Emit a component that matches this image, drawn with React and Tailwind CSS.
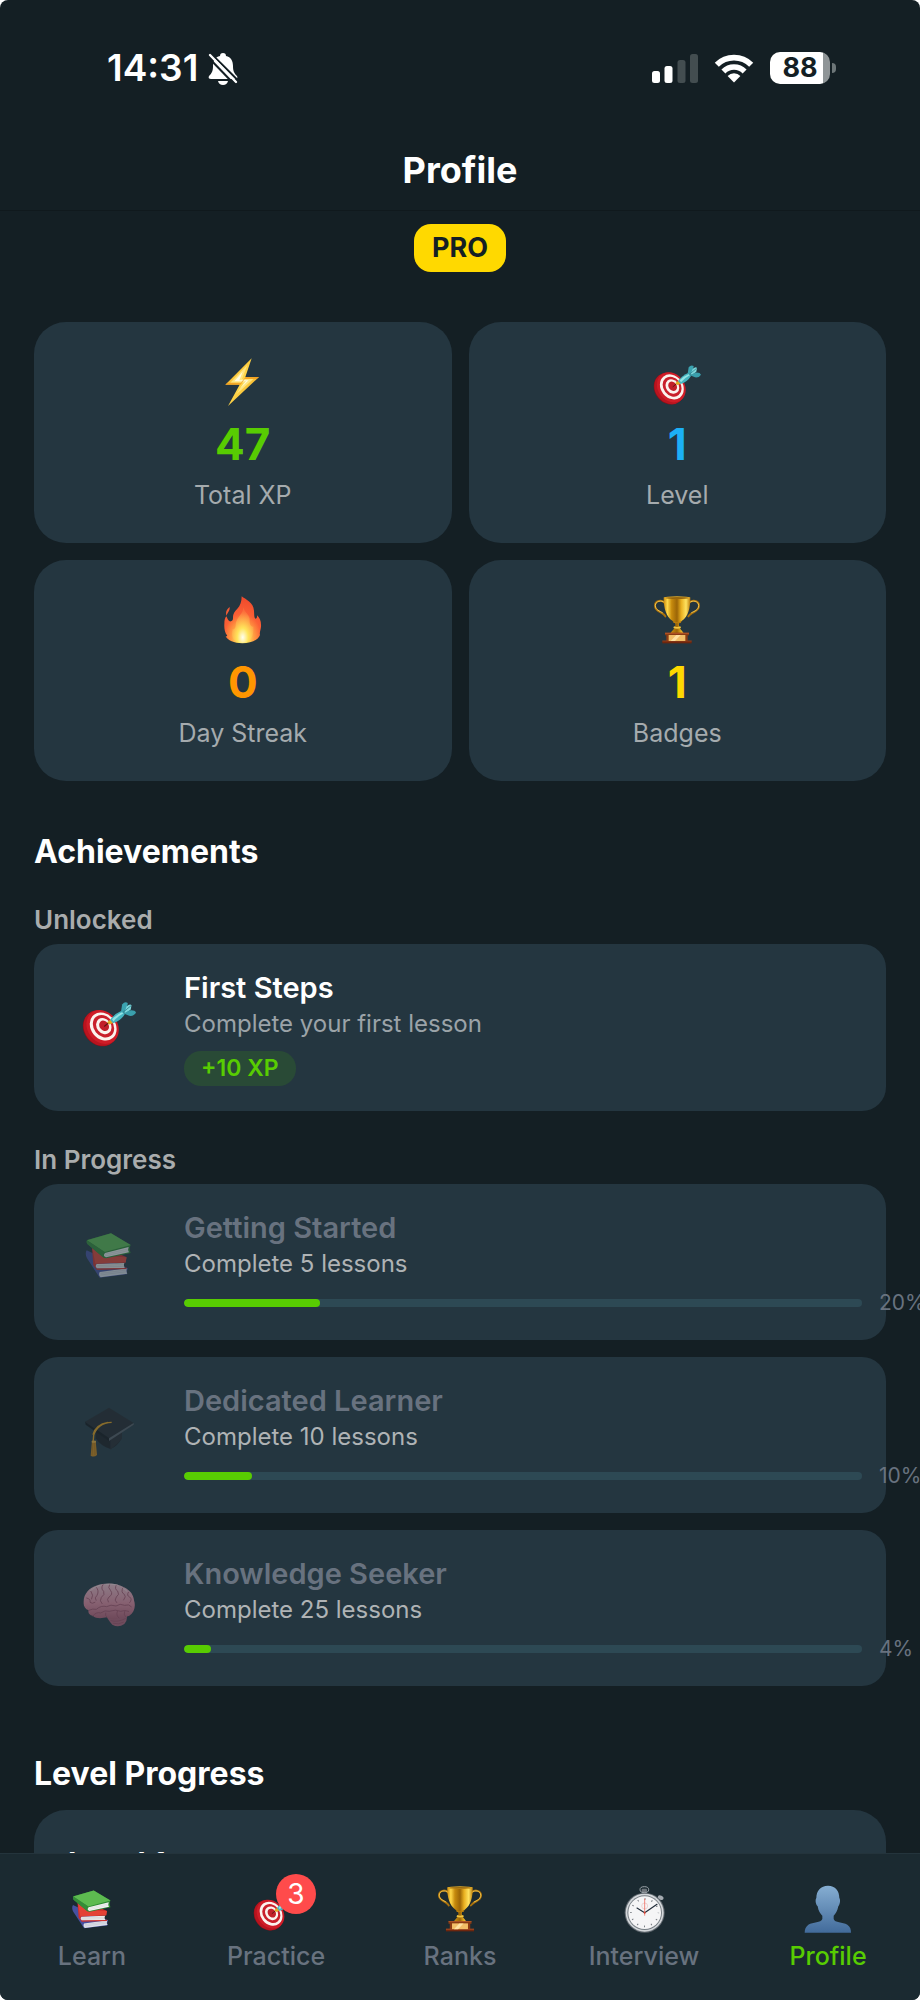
import React from 'react';

const BoltIcon = ({ className }) => (
  <svg viewBox="87 54 144 144" className={className} aria-hidden="true">
    <defs>
      <linearGradient id="bolt" x1="0" y1="0" x2="1" y2="1">
        <stop offset="0" stopColor="#f7a81b" />
        <stop offset="0.5" stopColor="#ffd84a" />
        <stop offset="1" stopColor="#e88d10" />
      </linearGradient>
    </defs>
    <path d="M185 55L106 134H149L114 198L207 111H166Z" fill="url(#bolt)" />
    <path d="M172 75L121 128H161L139 163L190 117H156Z" fill="#ffe680" />
    <path d="M158 95L133 124H168L151 145L176 121H148Z" fill="#fffbe0" />
    <path d="M106 134L112 128H153L166 111H207L200 117H164L152 134Z" fill="#f0981c" opacity="0.75" />
  </svg>
);

const TargetIcon = ({ className }) => (
  <svg viewBox="100 54 144 144" className={className} aria-hidden="true">
    <g transform="rotate(-38 151 145)">
      <ellipse cx="148" cy="144" rx="43" ry="50" fill="#8d0f18" />
      <ellipse cx="150" cy="144" rx="43" ry="50" fill="#b9141f" />
      <ellipse cx="156" cy="145" rx="40" ry="48" fill="#cf1c27" />
      <ellipse cx="158" cy="145" rx="33" ry="40" fill="#fbf3ee" />
      <ellipse cx="159" cy="145" rx="26" ry="32" fill="#c9202b" />
      <ellipse cx="160" cy="145" rx="19" ry="23" fill="#fbf3ee" />
      <ellipse cx="161" cy="145" rx="12" ry="15" fill="#c2202a" />
    </g>
    <path d="M160 140L174 128" stroke="#5c1712" strokeWidth="3" strokeLinecap="round" />
    <path d="M167 129L176 122L183 131L172 135Z" fill="#e2a91e" />
    <path d="M175 123Q187 106 207 98L214 108Q203 126 183 132Z" fill="#45b4c0" />
    <path d="M180 121Q193 108 208 102L210 106Q195 114 184 127Z" fill="#93e3e4" />
    <path d="M204 101L207 82Q214 73 222 78L220 92L213 105Z" fill="#3ba3b0" />
    <path d="M213 103L219 87Q228 79 232 84L230 95L217 105Z" fill="#7ed8dc" />
    <path d="M211 106L226 98Q241 96 244 104Q238 114 226 112Z" fill="#3a9fac" />
    <path d="M209 103L231 85" stroke="#247886" strokeWidth="2" />
  </svg>
);

const FlameIcon = ({ className }) => (
  <svg viewBox="87 48 144 144" className={className} aria-hidden="true">
    <defs>
      <radialGradient id="flame" cx="0.5" cy="0.88" r="0.85">
        <stop offset="0" stopColor="#fffbc4" />
        <stop offset="0.18" stopColor="#ffe45c" />
        <stop offset="0.36" stopColor="#ff9d42" />
        <stop offset="0.6" stopColor="#fb6035" />
        <stop offset="1" stopColor="#ef4a2c" />
      </radialGradient>
      <radialGradient id="flameCore" cx="0.5" cy="0.85" r="0.75">
        <stop offset="0" stopColor="#fffef0" />
        <stop offset="0.35" stopColor="#ffe45a" />
        <stop offset="0.7" stopColor="#ffae4c" stopOpacity="0.8" />
        <stop offset="1" stopColor="#ff9048" stopOpacity="0.3" />
      </radialGradient>
    </defs>
    <path
      d="M155 49C166 58 191 67 192 92C193 105 192 112 196 116C200 116 202 111 201 106C210 114 214 125 213 140C212 151 208 158 210 165C204 181 183 190 157 190C132 190 113 181 107 169C111 169 112 168 111 166C105 158 102 145 103 132C103 120 105 114 109 109C112 114 113 121 119 124C125 125 129 122 129 115C128 103 133 95 142 86C151 77 155 65 155 49Z"
      fill="url(#flame)"
    />
    <path d="M119 81C109 89 107 96 109 107C112 99 120 93 119 81Z" fill="#f15a35" />
    <path
      d="M160 82C163 99 181 103 179 124C178 136 186 142 190 140C192 164 184 187 157 188C130 188 122 168 128 148C133 149 137 145 137 135C137 114 160 103 160 82Z"
      fill="url(#flameCore)"
    />
  </svg>
);

const TrophyIcon = ({ className }) => (
  <svg viewBox="100 48 144 144" className={className} aria-hidden="true">
    <defs>
      <linearGradient id="cup" x1="0" x2="1" y1="0" y2="0">
        <stop offset="0" stopColor="#c8880c" />
        <stop offset="0.14" stopColor="#ffd84a" />
        <stop offset="0.3" stopColor="#c68a0d" />
        <stop offset="0.5" stopColor="#9b6507" />
        <stop offset="0.66" stopColor="#e9b020" />
        <stop offset="0.84" stopColor="#ffe260" />
        <stop offset="1" stopColor="#b97a0a" />
      </linearGradient>
    </defs>
    <g fill="none" strokeLinecap="round">
      <path d="M134 68C126 58 106 62 106 77C106 91 119 94 128 100Q134 104 137 109M209 68C218 58 238 62 238 77C238 91 226 94 216 100Q210 104 206 109" stroke="#a8700b" strokeWidth="6" />
      <path d="M134 67C126 60 107 62 107 77C107 90 120 93 128 98M210 67C218 60 237 62 237 77C237 90 225 93 216 98" stroke="#efc451" strokeWidth="3" />
    </g>
    <path d="M132 53H212C212 84 206 109 186 123C178 128 177 131 178 137C179 146 187 150 192 160H152C158 150 166 146 167 137C168 131 166 128 159 123C139 109 132 84 132 53Z" fill="url(#cup)" />
    <ellipse cx="172" cy="53" rx="40" ry="4" fill="#e5ad28" />
    <ellipse cx="172" cy="54" rx="34" ry="2" fill="#7d5007" />
    <path d="M159 123Q172 131 186 123L183 129H162Z" fill="#b97b0d" />
    <path d="M163 139Q172 143 182 139L184 144Q172 149 161 144Z" fill="#f1c541" />
    <path d="M136 158H208V166H204V183H140V166H136Z" fill="#8b3b13" />
    <path d="M128 182H216V190H128Z" fill="#70260d" />
    <path d="M136 158H208V161H136ZM128 182H216V184H128Z" fill="#b9592a" />
    <rect x="147" y="165" width="50" height="18" fill="#f2be67" />
    <path d="M153 183L170 165H183L166 183Z" fill="#ffe0a0" />
  </svg>
);

const BooksIcon = ({ className }) => (
  <svg viewBox="243 270 162 162" className={className} aria-hidden="true">
    <path d="M257 337Q251 347 258 361L296 419L378 409V398L381 391L331 372Z" fill="#4650a0" />
    <path d="M296 402L378 391Q374 400 379 407L299 418Q291 411 296 402Z" fill="#dcdfe8" />
    <path d="M299 406L376 396M299 411L376 401" stroke="#a7adbd" strokeWidth="1" />
    <path d="M273 330L277 382L288 396L376 393L378 389L288 391Q281 385 286 377L374 374L376 357L338 341Z" fill="#d0302c" />
    <path d="M287 378L370 375Q366 382 371 390L288 391Q281 385 287 378Z" fill="#eceaea" />
    <path d="M287 383L368 380M287 387L369 385" stroke="#b4b1b3" strokeWidth="1" />
    <path d="M274 330L283 377L374 373L377 358L310 355Z" fill="#e44236" />
    <path d="M258 306L330 286L389 321L387 326Q384 331 389 345L316 361Q308 361 304 356L259 318Q255 312 258 306Z" fill="#2f8b34" />
    <path d="M312 345L383 327Q379 336 384 343L315 358Q304 354 312 345Z" fill="#f3f4f3" />
    <path d="M311 349L381 333M312 354L381 338" stroke="#b7bebb" strokeWidth="1" />
    <path d="M258 307L330 286L389 321L311 342Z" fill="#5dbb50" />
    <path d="M258 307L311 342Q303 349 307 358L259 318Q255 312 258 307Z" fill="#348c38" />
  </svg>
);

const GraduationIcon = ({ className }) => (
  <svg viewBox="243 786 162 162" className={`${className} overflow-visible`} aria-hidden="true">
    <path d="M284 856V898Q300 922 328 930Q350 922 362 898V857Z" fill="#191b20" />
    <path d="M328 890L363 864V899Q350 915 328 932Z" fill="#25272d" />
    <path d="M252 848L324 806L398 852L324 898Z" fill="#23262b" />
    <path d="M252 848L324 898V906L254 857Z" fill="#121418" />
    <path d="M324 898L398 852V857L324 906Z" fill="#575c64" />
    <path d="M332 850Q290 852 278 889L276 913M321 850Q284 856 276 887" fill="none" stroke="#e8a018" strokeWidth="4" />
    <path d="M273 905H284L288 948Q279 956 269 950Z" fill="#d68b14" />
    <path d="M276 909L273 949M281 909L282 949" stroke="#8f5707" strokeWidth="1" />
    <rect x="272" y="905" width="13" height="6" rx="2" fill="#f0b23b" />
  </svg>
);

const BrainIcon = ({ className }) => (
  <svg viewBox="243 225 162 162" className={className} aria-hidden="true">
    <defs>
      <linearGradient id="brain" x1="0" x2="0" y1="0" y2="1">
        <stop offset="0" stopColor="#f5c3cf" />
        <stop offset="0.55" stopColor="#e88ba2" />
        <stop offset="1" stopColor="#b75c74" />
      </linearGradient>
    </defs>
    <path d="M315 350Q326 369 334 377Q352 388 370 375Q380 365 377 350Z" fill="#ba627a" />
    <path d="M248 310C247 284 265 267 285 260C310 250 349 251 369 265C389 274 398 290 399 304C405 322 400 341 385 350C373 356 365 352 354 358C340 364 325 361 318 355C305 358 284 360 276 351C262 348 261 338 263 334C252 330 247 321 248 310Z" fill="url(#brain)" />
    <g fill="none" stroke="#a64e68" strokeWidth="2.5" strokeLinecap="round">
      <path d="M263 334Q276 328 286 331Q301 318 317 323Q329 315 345 321Q357 312 371 319Q384 314 391 323" />
      <path d="M276 351Q284 338 299 342Q312 332 325 337Q344 330 359 337Q371 332 383 337" />
      <path d="M257 297Q270 300 267 310Q273 316 282 310M270 277Q279 289 272 300M285 264Q296 275 288 289Q279 296 285 304" />
      <path d="M306 257Q298 268 308 277Q313 287 301 295Q294 306 303 314M326 255Q319 267 329 275Q337 286 324 294Q316 300 322 309" />
      <path d="M346 258Q339 270 350 276Q357 287 346 294Q338 304 347 311M366 266Q358 280 370 286Q377 292 368 303M382 280Q376 290 386 294Q395 301 386 311" />
      <path d="M314 342Q311 350 318 355M349 337Q344 350 354 357M371 337Q367 346 373 353" />
      <path d="M330 365Q350 371 373 359M337 373Q352 378 367 370" />
    </g>
    <path d="M269 274Q281 263 297 259M315 256Q333 254 349 258M365 266L378 277" stroke="#ffe2e6" strokeWidth="3" fill="none" strokeLinecap="round" opacity="0.7" />
  </svg>
);

const StopwatchIcon = ({ className }) => (
  <svg viewBox="483 171 138 138" className={`${className} overflow-visible`} aria-hidden="true">
    <rect x="546" y="184" width="14" height="14" fill="#858b91" />
    <ellipse cx="553" cy="182" rx="13" ry="9" fill="none" stroke="#9da5ab" strokeWidth="3" />
    <rect x="545" y="179" width="16" height="9" rx="3" fill="#6d747a" />
    <path d="M590 215L601 204" stroke="#737b82" strokeWidth="6" />
    <ellipse cx="602" cy="206" rx="9" ry="6" transform="rotate(25 602 206)" fill="#a4aab0" />
    <circle cx="554" cy="251" r="60" fill="#60686f" />
    <circle cx="554" cy="251" r="57" fill="#d3d7da" />
    <circle cx="554" cy="251" r="52" fill="#787f85" />
    <circle cx="554" cy="251" r="49" fill="#f5f5f6" />
    <circle cx="554" cy="251" r="41" fill="none" stroke="#767b80" strokeWidth="5" strokeDasharray="3 18.47" strokeDashoffset="1.5" />
    <circle cx="554" cy="231" r="9" fill="none" stroke="#e6b3ae" strokeWidth="1.5" />
    <path d="M554 251L531 237M554 251L591 226" stroke="#202c39" strokeWidth="3.5" strokeLinecap="round" />
    <path d="M554 209V260" stroke="#ee5142" strokeWidth="2" />
    <circle cx="554" cy="251" r="3" fill="#d74635" />
  </svg>
);

const PersonIcon = ({ className }) => (
  <svg viewBox="1035 171 138 138" className={`${className} overflow-visible`} aria-hidden="true">
    <defs>
      <linearGradient id="person" x1="0" x2="0" y1="0" y2="1">
        <stop offset="0" stopColor="#86aed2" />
        <stop offset="1" stopColor="#426b9b" />
      </linearGradient>
    </defs>
    <path d="M1104 170C1126 170 1138 185 1138 207C1142 213 1140 226 1135 232C1132 246 1127 254 1121 260V270C1124 282 1148 279 1162 287C1171 293 1173 301 1173 311H1034C1034 301 1037 293 1045 287C1059 279 1083 282 1087 270V260C1081 254 1075 246 1073 232C1067 226 1065 213 1069 207C1069 185 1082 170 1104 170Z" fill="url(#person)" />
  </svg>
);

const SilentBellIcon = () => (
  <svg viewBox="0 0 30 33" className="h-[33px] w-[30px]" aria-hidden="true">
    <path d="M15 1C17 1 18 2 18 4C23 5 25 9 25 14C25 19 26 21 29 24C30 26 29 27 27 27H3C1 27 0 26 1 24C4 21 5 19 5 14C5 9 7 5 12 4C12 2 13 1 15 1Z" fill="#fff" />
    <path d="M10 29H20Q19 33 15 33Q11 33 10 29Z" fill="#fff" />
    <path d="M3.5 2L30.5 29" stroke="#141f24" strokeWidth="2" />
    <path d="M2 3L28 30" stroke="#fff" strokeWidth="2.4" strokeLinecap="round" />
    <path d="M0 5L26 32" stroke="#141f24" strokeWidth="2" />
  </svg>
);

const SignalIcon = () => (
  <svg viewBox="0 0 46 29" className="h-[29px] w-[46px]" aria-hidden="true">
    <rect x="0" y="17" width="8" height="12" rx="2.5" fill="#fff" />
    <rect x="12.5" y="12" width="8" height="17" rx="2.5" fill="#fff" />
    <rect x="25.5" y="6" width="8" height="23" rx="2.5" fill="#434d50" />
    <rect x="38" y="0" width="8" height="29" rx="2.5" fill="#434d50" />
  </svg>
);

const WifiIcon = () => (
  <svg viewBox="0 0 40 29" className="h-[29px] w-10" aria-hidden="true">
    <path d="M2.8 10.8A24.4 24.4 0 0 1 37.2 10.8" fill="none" stroke="#fff" strokeWidth="5.8" />
    <path d="M9.4 17.4A15 15 0 0 1 30.6 17.4" fill="none" stroke="#fff" strokeWidth="5.6" />
    <path d="M20 28.5L13.6 22A9 9 0 0 1 26.4 22Z" fill="#fff" />
  </svg>
);

const stats = [
  { label: 'Total XP', value: 47, Icon: BoltIcon, color: 'text-[#58cc02]' },
  { label: 'Level', value: 1, Icon: TargetIcon, color: 'text-[#1cb0f6]' },
  { label: 'Day Streak', value: 0, Icon: FlameIcon, color: 'text-[#ff9600]' },
  { label: 'Badges', value: 1, Icon: TrophyIcon, color: 'text-[#ffd900]' },
];

const inProgress = [
  { title: 'Getting Started', description: 'Complete 5 lessons', percent: 20, Icon: BooksIcon },
  { title: 'Dedicated Learner', description: 'Complete 10 lessons', percent: 10, Icon: GraduationIcon },
  { title: 'Knowledge Seeker', description: 'Complete 25 lessons', percent: 4, Icon: BrainIcon },
];

const tabs = [
  { label: 'Learn', Icon: BooksIcon },
  { label: 'Practice', Icon: TargetIcon, badge: 3 },
  { label: 'Ranks', Icon: TrophyIcon },
  { label: 'Interview', Icon: StopwatchIcon },
  { label: 'Profile', Icon: PersonIcon, active: true },
];

const StatusBar = () => (
  <div className="flex h-12 items-center justify-between pr-[84px] pl-[107px]">
    <div className="flex items-center gap-2.5">
      <span className="text-[37px] font-semibold">14:31</span>
      <SilentBellIcon />
    </div>
    <div className="flex items-center gap-4">
      <SignalIcon />
      <WifiIcon />
      <div className="flex items-center gap-0.5">
        <div className="flex h-8 w-[60px] items-center justify-center rounded-[10px] bg-linear-to-r from-white from-88% to-[#8f9597] to-88% text-[27px] font-bold text-[#141f24]">
          88
        </div>
        <div className="h-2.5 w-1 rounded-r-full bg-[#6d7678]" />
      </div>
    </div>
  </div>
);

const StatCard = ({ stat }) => {
  const { Icon } = stat;
  return (
    <div className="flex flex-col items-center rounded-[32px] bg-[#243640] pt-9 pb-[31px]">
      <Icon className="size-12" />
      <p className={`mt-3 text-[44px] leading-[52px] font-bold ${stat.color}`}>{stat.value}</p>
      <p className="mt-2 text-[25px] leading-[34px] text-[#a5abae]">{stat.label}</p>
    </div>
  );
};

const AchievementCard = ({ item, locked = false, children }) => {
  const { Icon } = item;
  return (
    <div className="flex rounded-3xl bg-[#243640] pt-[26px] pr-6">
      <div className="flex w-[150px] shrink-0 items-center justify-center pb-10">
        <Icon className={locked ? 'size-[54px] opacity-50' : 'size-[54px]'} />
      </div>
      <div className="min-w-0 flex-1">
        <h4 className={`text-[29px] leading-9 font-semibold ${locked ? 'text-[#68727f]' : 'text-white'}`}>
          {item.title}
        </h4>
        <p className={`mt-0.5 text-[24px] leading-8 ${locked ? 'text-[#afb3b5]' : 'text-[#9ba3a8]'}`}>
          {item.description}
        </p>
        {children}
      </div>
    </div>
  );
};

const App = () => {
  return (
    <div className="flex h-screen flex-col overflow-hidden rounded-lg bg-[#141f24] font-['Inter','Liberation_Sans',sans-serif] text-white">
      <header className="shrink-0 border-b border-[#10191d] pt-11">
        <StatusBar />
        <h1 className="pt-[58px] pb-5 text-center text-[36px] leading-10 font-bold">Profile</h1>
      </header>

      <main className="min-h-0 flex-1 overflow-x-hidden overflow-y-auto px-[34px] pt-[13px] [scrollbar-width:none]">
        <div className="flex justify-center">
          <span className="rounded-[17px] bg-[#ffd900] px-[18px] text-[27px] leading-[48px] font-bold text-[#141f24]">PRO</span>
        </div>

        <section className="mt-[50px] grid grid-cols-2 gap-[17px]">
          {stats.map((stat) => (
            <StatCard key={stat.label} stat={stat} />
          ))}
        </section>

        <section>
          <h2 className="mt-[51px] text-[32px] leading-10 font-bold">Achievements</h2>

          <h3 className="mt-8 mb-2 text-[26px] leading-8 font-semibold text-[#a9acad]">Unlocked</h3>
          <AchievementCard item={{ title: 'First Steps', description: 'Complete your first lesson', Icon: TargetIcon }}>
            <span className="mt-[11px] mb-[25px] block w-fit rounded-[17px] bg-[#294a36] px-[17px] text-[23px] leading-[35px] font-semibold text-[#58cc02]">
              +10 XP
            </span>
          </AchievementCard>

          <h3 className="mt-[33px] mb-2 text-[26px] leading-8 font-semibold text-[#a9acad]">In Progress</h3>
          <div className="flex flex-col gap-[17px]">
            {inProgress.map((item) => (
              <AchievementCard key={item.title} item={item} locked>
                <div className="mt-2 mb-[22px] flex items-center gap-[17px]">
                  <div className="h-2 w-full shrink-0 overflow-hidden rounded-full bg-[#2d4954]">
                    <div className="h-full rounded-full bg-[#58cc02]" style={{ width: `${item.percent}%` }} />
                  </div>
                  <span className="shrink-0 text-[21px] leading-[30px] text-[#68727f]">{item.percent}%</span>
                </div>
              </AchievementCard>
            ))}
          </div>
        </section>

        <section>
          <h2 className="mt-[68px] text-[32px] leading-10 font-bold">Level Progress</h2>
          <div className="mt-4 flex items-end justify-between rounded-[32px] bg-[#243640] px-[34px] pt-[33px] pb-9">
            <span className="text-[30px] leading-10 font-bold">Level 1</span>
            <span className="text-[23px] leading-9 text-[#a5abae]">47 / 100 XP</span>
          </div>
        </section>
      </main>

      <nav className="grid shrink-0 grid-cols-5 border-t border-[#24343c] bg-[#1b2a31] pt-8 pb-7">
        {tabs.map(({ label, Icon, badge, active }) => (
          <a key={label} href={`#${label.toLowerCase()}`} className="flex flex-col items-center gap-2">
            <span className="relative">
              <Icon className="size-[46px]" />
              {badge && (
                <span className="absolute -top-3 left-1/2 flex size-10 items-center justify-center rounded-full bg-[#ff4b4b] text-[28px] leading-10">
                  {badge}
                </span>
              )}
            </span>
            <span className={`text-[25px] leading-8 font-medium ${active ? 'text-[#58cc02]' : 'text-[#68727f]'}`}>
              {label}
            </span>
          </a>
        ))}
      </nav>
    </div>
  );
};

export default App;
